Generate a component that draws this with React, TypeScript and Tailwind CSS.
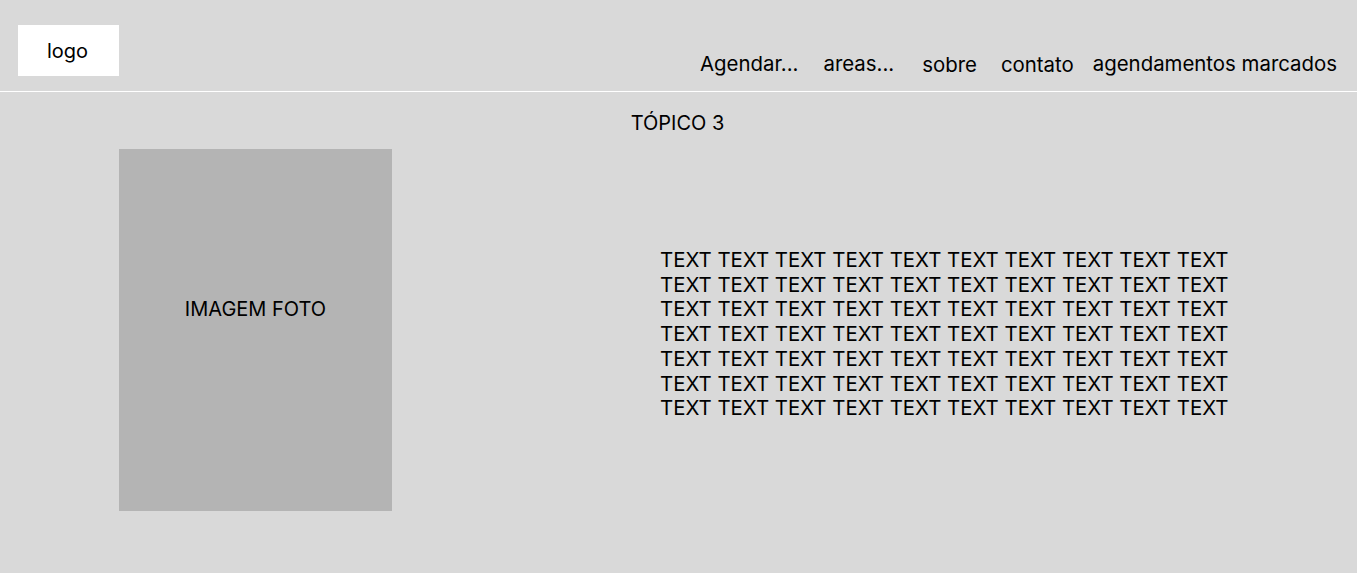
import React from "react";

export default function App() {
  const line = Array(10).fill("TEXT").join(" ");
  return (
    <div className="w-[1357px] h-[573px] bg-[#d9d9d9] text-black overflow-hidden" style={{ fontFamily: "Inter, 'Noto Sans', sans-serif" }}>
      <header className="h-[92px] flex items-start border-b border-white">
        <div className="ml-[18px] mt-[25px] w-[101px] h-[51px] bg-white flex items-center justify-center text-[20px] leading-none pr-[2px]">logo</div>
        <nav className="ml-auto mr-[20px] mt-[51px] flex items-center text-[20.4px] leading-[24px]">
          <span>Agendar...</span>
          <span className="ml-[25px]">areas...</span>
          <span className="ml-[28px] mt-[2px]">sobre</span>
          <span className="ml-[24px] mt-[2px]">contato</span>
          <span className="ml-[19px]">agendamentos marcados</span>
        </nav>
      </header>
      <div className="text-center text-[20px] leading-[24px] mt-[19px] pr-[2px]">TÓPICO 3</div>
      <div className="flex items-start mt-[14px]">
        <div className="ml-[119px] w-[273px] h-[362px] bg-[#b4b4b4] flex justify-center pt-[148px] text-[20px] leading-[24px]">IMAGEM FOTO</div>
        <div className="ml-[268px] mt-[99px] text-[20.4px] leading-[24.7px]">
          {Array.from({ length: 7 }).map((_, i) => (
            <div key={i}>{line}</div>
          ))}
        </div>
      </div>
    </div>
  );
}
